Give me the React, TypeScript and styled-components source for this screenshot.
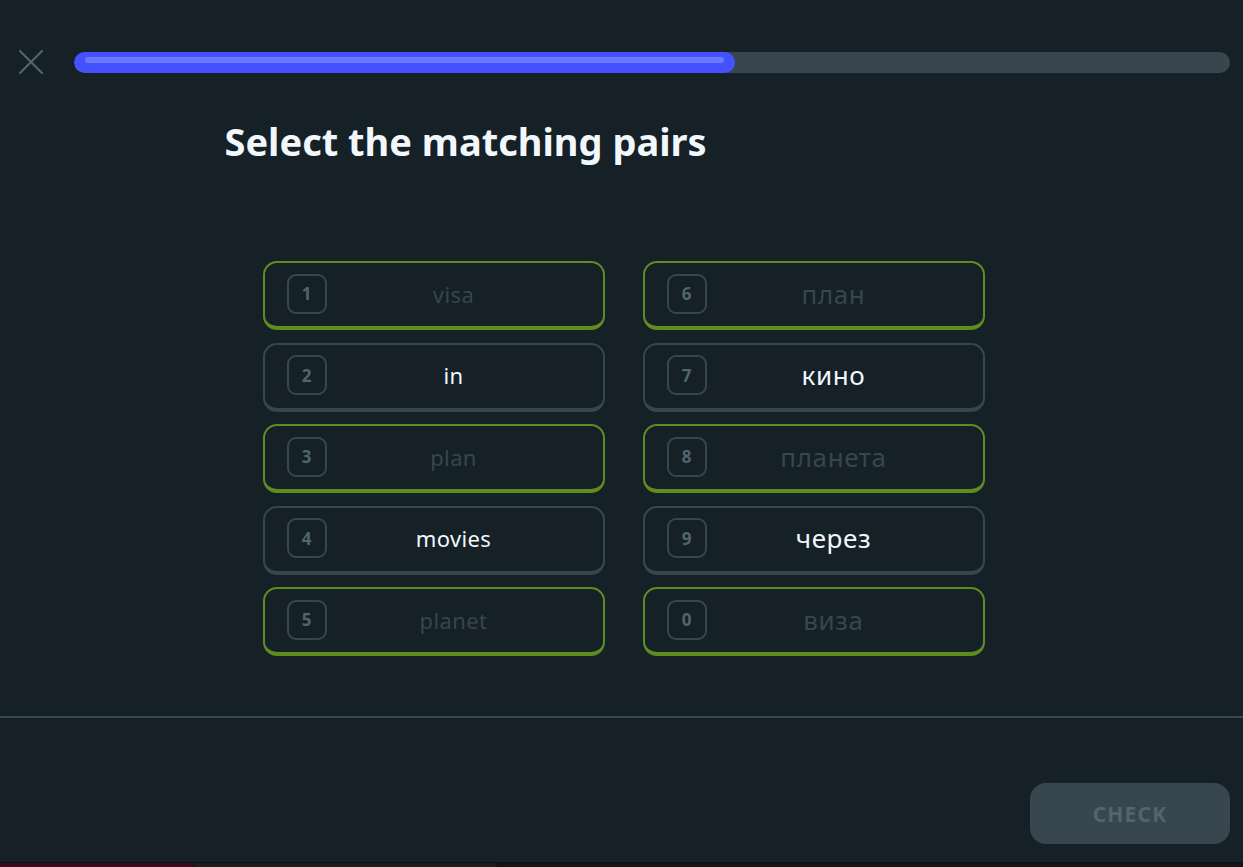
import React from 'react';
import styled, {createGlobalStyle, css} from 'styled-components';

const GlobalStyle = createGlobalStyle`
    html, body {
        margin: 0;
        padding: 0;
        background: #152027;
    }
    * {
        box-sizing: border-box;
    }
    body {
        font-family: "Noto Sans", "DejaVu Sans", sans-serif;
        color: #f1f7fb;
    }
`;

type Pair = {key: string; text: string; matched: boolean};

const leftItems: Pair[] = [
    {key: '1', text: 'visa', matched: true},
    {key: '2', text: 'in', matched: false},
    {key: '3', text: 'plan', matched: true},
    {key: '4', text: 'movies', matched: false},
    {key: '5', text: 'planet', matched: true},
];

const rightItems: Pair[] = [
    {key: '6', text: 'план', matched: true},
    {key: '7', text: 'кино', matched: false},
    {key: '8', text: 'планета', matched: true},
    {key: '9', text: 'через', matched: false},
    {key: '0', text: 'виза', matched: true},
];

const progress = 57.2;

/**
 * 配對題
 */
const App = () => {
    return <Page>
        <GlobalStyle/>

        <Header>
            <CloseButton aria-label="Close">
                <svg width="24" height="24" viewBox="0 0 24 24" fill="none">
                    <path d="M1 1L23 23M23 1L1 23" stroke="#52656d" strokeWidth="2.2" strokeLinecap="round"/>
                </svg>
            </CloseButton>
            <ProgressTrack>
                <ProgressFill style={{width: `${progress}%`}}>
                    <ProgressShine/>
                </ProgressFill>
            </ProgressTrack>
        </Header>

        <Main>
            <Content>
                <Title>Select the matching pairs</Title>
                <PairGrid>
                    <Column>
                        {leftItems.map(item => <PairCard key={item.key} $matched={item.matched}>
                            <KeyBadge>{item.key}</KeyBadge>
                            <CardText $matched={item.matched}>{item.text}</CardText>
                        </PairCard>)}
                    </Column>
                    <Column>
                        {rightItems.map(item => <PairCard key={item.key} $matched={item.matched}>
                            <KeyBadge>{item.key}</KeyBadge>
                            <CardText $matched={item.matched} $cyrillic>{item.text}</CardText>
                        </PairCard>)}
                    </Column>
                </PairGrid>
            </Content>
        </Main>

        <Footer>
            <CheckButton disabled>Check</CheckButton>
        </Footer>

        <TaskStrip>
            <StripPart $color="#3b0b25" $width={194}/>
            <StripPart $color="#1c1d1f" $width={303}/>
            <StripPart $color="#141519" $width={0}/>
        </TaskStrip>
    </Page>;
};

export default App;



const Page = styled.div`
    width: 100%;
    height: 100vh;
    display: flex;
    flex-direction: column;
    overflow: hidden;
`;

const Header = styled.div`
    display: flex;
    align-items: center;
    gap: 31px;
    padding: 50px 13px 0 19px;
`;

const CloseButton = styled.button`
    width: 24px;
    height: 24px;
    padding: 0;
    border: 0;
    background: transparent;
    display: flex;
    align-items: center;
    justify-content: center;
    cursor: pointer;
`;

const ProgressTrack = styled.div`
    flex: 1;
    height: 21px;
    border-radius: 11px;
    background: #37464f;
    overflow: hidden;
`;

const ProgressFill = styled.div`
    height: 100%;
    border-radius: 11px;
    background: #4451fe;
    padding: 5px 11px 0 11px;
`;

const ProgressShine = styled.div`
    height: 6px;
    border-radius: 3px;
    background: #6b77ff;
`;

const Main = styled.div`
    flex: 1;
    display: flex;
    justify-content: center;
`;

const Content = styled.div`
    width: 794px;
    display: flex;
    flex-direction: column;
    padding-top: 41px;
`;

const Title = styled.h1`
    margin: 0;
    font-family: "Noto Sans", sans-serif;
    font-size: 38px;
    line-height: 52px;
    font-weight: 700;
    color: #f1f7fb;
`;

const PairGrid = styled.div`
    display: grid;
    grid-template-columns: 342px 342px;
    column-gap: 38px;
    justify-content: center;
    padding-left: 4px;
    margin-top: 94px;
`;

const Column = styled.div`
    display: flex;
    flex-direction: column;
    gap: 12.5px;
`;

const PairCard = styled.div<{$matched: boolean}>`
    position: relative;
    height: 69px;
    display: flex;
    align-items: center;
    padding: 0 22px 2px 22px;
    border: 2px solid #37464f;
    border-bottom-width: 4px;
    border-radius: 14px;
    background: #152027;

    ${props => props.$matched && css`
        border-color: #5f8c1e;
    `}
`;

const KeyBadge = styled.div`
    width: 40px;
    height: 40px;
    flex-shrink: 0;
    display: flex;
    align-items: center;
    justify-content: center;
    border: 2px solid #37464f;
    border-radius: 9px;
    font-family: "Noto Sans", sans-serif;
    font-size: 17px;
    font-weight: 700;
    color: #52656d;
`;

const CardText = styled.div<{$matched: boolean, $cyrillic?: boolean}>`
    flex: 1;
    text-align: center;
    font-family: "Noto Sans", sans-serif;
    font-size: ${props => props.$cyrillic ? '26px' : '22px'};
    letter-spacing: ${props => props.$cyrillic ? '0.6px' : '0.4px'};
    color: ${props => props.$matched ? '#37464f' : '#f1f7fb'};
`;

const Footer = styled.div`
    height: 146px;
    border-top: 2px solid #37464f;
    display: flex;
    justify-content: flex-end;
    align-items: flex-start;
    padding: 65px 13px 0 0;
`;

const CheckButton = styled.button`
    width: 200px;
    height: 61px;
    border: 0;
    border-radius: 16px;
    background: #37464f;
    font-family: "Noto Sans", sans-serif;
    font-size: 21px;
    font-weight: 700;
    letter-spacing: 1.2px;
    text-transform: uppercase;
    color: #52656d;
    cursor: default;
`;

const TaskStrip = styled.div`
    height: 5px;
    display: flex;
    border-top: 1px solid #0b0f12;
`;

const StripPart = styled.div<{$color: string, $width: number}>`
    background: ${props => props.$color};
    ${props => props.$width ? css`width: ${props.$width}px;` : css`flex: 1;`}
    border-right: 1px solid #0b0f12;
`;
